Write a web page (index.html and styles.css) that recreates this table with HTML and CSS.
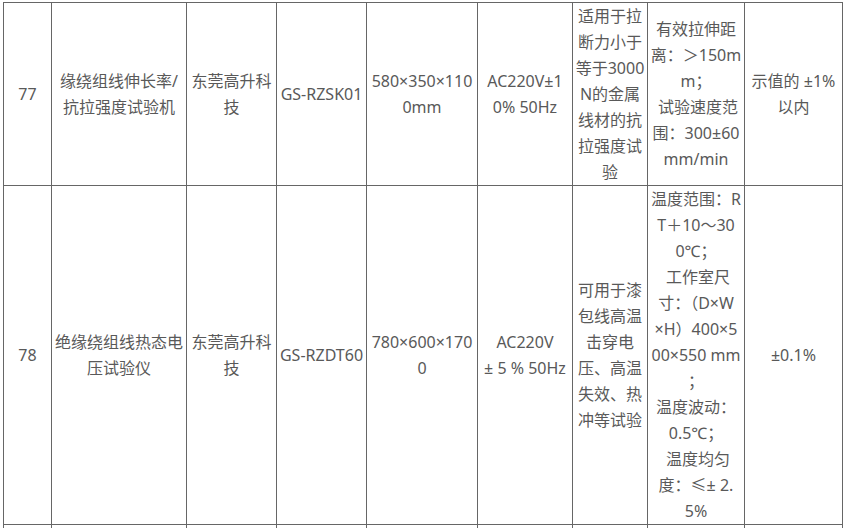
FILE: index.html
```html
<!DOCTYPE html>
<html lang="zh-CN">
<head>
<meta charset="utf-8">
<title>设备清单</title>
<link rel="stylesheet" href="styles.css">
</head>
<body>
<table class="grid">
  <colgroup>
    <col class="c-no">
    <col class="c-name">
    <col class="c-maker">
    <col class="c-model">
    <col class="c-size">
    <col class="c-power">
    <col class="c-use">
    <col class="c-spec">
    <col class="c-acc">
  </colgroup>
  <tbody>
    <tr>
      <td>77</td>
      <td>缘绕组线伸长率/<br>抗拉强度试验机</td>
      <td>东莞高升科<br>技</td>
      <td>GS-RZSK01</td>
      <td>580×350×110<br>0mm</td>
      <td>AC220V±1<br>0% 50Hz</td>
      <td>适用于拉<br>断力小于<br>等于3000<br>N的金属<br>线材的抗<br>拉强度试<br>验</td>
      <td>有效拉伸距<br>离：＞150m<br>m；<br>&nbsp;试验速度范<br>围：300±60<br>mm/min</td>
      <td>示值的 ±1%<br>以内</td>
    </tr>
    <tr>
      <td>78</td>
      <td>绝缘绕组线热态电<br>压试验仪</td>
      <td>东莞高升科<br>技</td>
      <td>GS-RZDT60</td>
      <td>780×600×170<br>0</td>
      <td>AC220V<br>± 5 % 50Hz</td>
      <td>可用于漆<br>包线高温<br>击穿电<br>压、高温<br>失效、热<br>冲等试验</td>
      <td>温度范围：R<br>T＋10～30<br>0℃；<br>&nbsp;工作室尺<br>寸：（D×W<br>×H）400×5<br>00×550 mm<br>；<br>温度波动：<br>0.5℃；<br>&nbsp;温度均匀<br>度：≤± 2.<br>5%</td>
      <td>±0.1%</td>
    </tr>
    <tr class="tail">
      <td></td><td></td><td></td><td></td><td></td><td></td><td></td><td></td><td></td>
    </tr>
  </tbody>
</table>
</body>
</html>
```

FILE: styles.css
```css
html, body {
  margin: 0;
  padding: 0;
  background: #ffffff;
}

body {
  font-family: "Noto Sans", "Noto Sans CJK SC", sans-serif;
  font-size: 16px;
  color: #595959;
}

.grid {
  margin: 2px 0 0 3px;
  width: 840px;
  table-layout: fixed;
  border-collapse: separate;
  border-spacing: 0;
  border-top: 1px solid #666666;
  border-left: 1px solid #666666;
}

.grid td {
  padding: 0;
  border-right: 1px solid #666666;
  border-bottom: 1px solid #666666;
  text-align: center;
  vertical-align: middle;
  line-height: 26px;
  white-space: nowrap;
}

.c-no { width: 48px; }
.c-name { width: 135px; }
.c-maker { width: 90px; }
.c-model { width: 90px; }
.c-size { width: 111px; }
.c-power { width: 95px; }
.c-use { width: 75px; }
.c-spec { width: 97px; }
.c-acc { width: 98px; }

.tail td {
  height: 40px;
}
```
